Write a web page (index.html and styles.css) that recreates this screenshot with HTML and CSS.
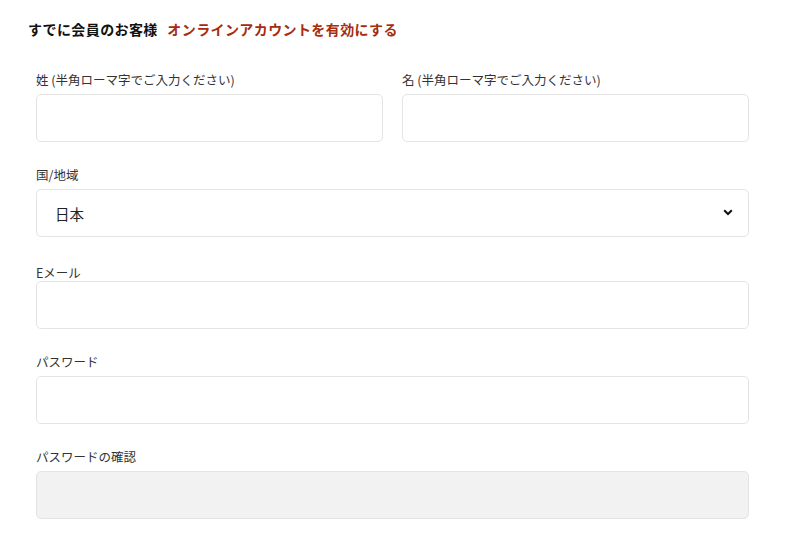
FILE: index.html
```html
<!DOCTYPE html>
<html lang="ja">
<head>
  <meta charset="UTF-8">
  <meta name="viewport" content="width=device-width, initial-scale=1.0">
  <title>新規登録</title>
  <link rel="stylesheet" href="styles.css">
</head>
<body>
  <div class="page">
    <div class="member-line">
      <span class="member-text">すでに会員のお客様</span>
      <a href="#" class="member-link">オンラインアカウントを有効にする</a>
    </div>
    <form class="signup-form">
      <div class="form-row">
        <div class="form-group">
          <label for="last-name">姓 (半角ローマ字でご入力ください)</label>
          <input type="text" id="last-name">
        </div>
        <div class="form-group">
          <label for="first-name">名 (半角ローマ字でご入力ください)</label>
          <input type="text" id="first-name">
        </div>
      </div>
      <div class="form-group">
        <label for="country">国/地域</label>
        <div class="select-wrap">
          <select id="country">
            <option>日本</option>
          </select>
          <svg class="chevron" width="10" height="7" viewBox="0 0 10 7"><path d="M1.2 1.2L5 5l3.8-3.8" fill="none" stroke="#111" stroke-width="2"/></svg>
        </div>
      </div>
      <div class="form-group email-group">
        <label for="email">Eメール</label>
        <input type="email" id="email">
      </div>
      <div class="form-group">
        <label for="password">パスワード</label>
        <input type="password" id="password">
      </div>
      <div class="form-group">
        <label for="password-confirm">パスワードの確認</label>
        <input type="password" id="password-confirm" disabled>
      </div>
    </form>
  </div>
</body>
</html>
```

FILE: styles.css
```css
body {
  margin: 0;
  font-family: "Noto Sans CJK JP", "Noto Sans", sans-serif;
  background-color: #ffffff;
  color: #333;
}
.page {
  padding: 19px 0 0 28px;
}
.member-line {
  font-size: 14px;
  line-height: 20px;
  font-weight: bold;
  letter-spacing: 0.4px;
}
.member-text {
  color: #111;
  margin-right: 6px;
}
.member-link {
  color: #a52d0d;
  text-decoration: none;
}
.signup-form {
  width: 713px;
  margin: 33px 0 0 8px;
}
.form-row {
  display: grid;
  grid-template-columns: 1fr 1fr;
  gap: 19px;
}
.form-group {
  margin-bottom: 25px;
}
.form-group label {
  display: block;
  font-size: 12.5px;
  line-height: 16px;
  color: #333;
  margin-bottom: 6px;
}
.email-group {
  padding-top: 3px;
}
.email-group label {
  margin-bottom: 0;
}
.form-group input,
.form-group select {
  display: block;
  box-sizing: border-box;
  width: 100%;
  height: 48px;
  border: 1px solid #e4e4e4;
  border-radius: 5px;
  background-color: #fff;
  font-family: inherit;
  font-size: 14px;
  padding: 0 18px;
  outline: none;
}
.form-group input:disabled {
  background-color: #f2f2f2;
}
.select-wrap {
  position: relative;
}
.form-group select {
  appearance: none;
  -webkit-appearance: none;
  color: #222;
  font-size: 14.5px;
}
.chevron {
  position: absolute;
  right: 16px;
  top: 20px;
  pointer-events: none;
}
```
